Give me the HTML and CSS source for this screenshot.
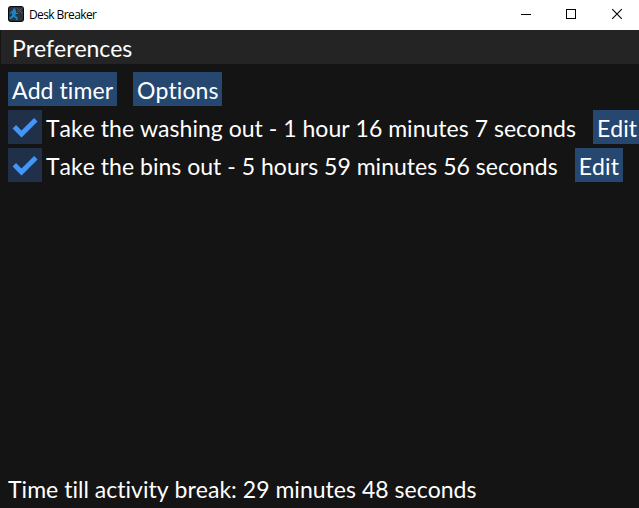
FILE: index.html
```html
<!DOCTYPE html>
<html lang="en">
<head>
<meta charset="utf-8">
<title>Desk Breaker</title>
<link rel="stylesheet" href="styles.css">
</head>
<body>
<div class="window">
  <header class="titlebar">
    <svg class="app-icon" width="16" height="16" viewBox="0 0 16 16">
      <rect width="16" height="16" rx="3" fill="#07090d"/>
      <rect x="1" y="1" width="14" height="14" rx="2" fill="#29343b"/>
      <path d="M5 2.500h2.500v2H5zM3 5.500l2-1h3v2l2 .5v1H7.500v2l2 1v3H8l-.5-2-2-1-2 2H1.500v-1.500l2.500-2V6.500L2.500 8H1.500z" fill="#1c83c4"/>
      <path d="M9 2l5.500 5.500M14.500 1.500L10 6" stroke="#a04028" stroke-width="1" fill="none"/>
    </svg>
    <span class="title">Desk Breaker</span>
    <div class="controls">
      <svg width="46" height="30" viewBox="0 0 46 30" shape-rendering="crispEdges"><path d="M19 14.5h10" stroke="#000"/></svg>
      <svg width="46" height="30" viewBox="0 0 46 30" shape-rendering="crispEdges"><rect x="18.500" y="9.500" width="9" height="9" fill="none" stroke="#000"/></svg>
      <svg width="45" height="30" viewBox="0 0 45 30"><path d="M18.200 9.200l9.600 9.600M27.800 9.200l-9.600 9.600" stroke="#000" stroke-width="1.100"/></svg>
    </div>
  </header>
  <nav class="menubar"><span class="text menu">Preferences</span></nav>
  <main class="content">
    <div class="toolbar">
      <button class="button add"><span class="text">Add timer</span></button>
      <button class="button options"><span class="text">Options</span></button>
    </div>
    <div class="timer">
      <span class="check"><svg width="34" height="34" viewBox="0 0 34 34"><path d="M6.300 16.800l7.200 7.200 14.300-14.300" fill="none" stroke="#4296fa" stroke-width="4.900"/></svg></span>
      <span class="text label">Take the washing out - 1 hour 16 minutes 7 seconds</span>
      <button class="button edit"><span class="text">Edit</span></button>
    </div>
    <div class="timer">
      <span class="check"><svg width="34" height="34" viewBox="0 0 34 34"><path d="M6.300 16.800l7.200 7.200 14.300-14.300" fill="none" stroke="#4296fa" stroke-width="4.900"/></svg></span>
      <span class="text label">Take the bins out - 5 hours 59 minutes 56 seconds</span>
      <button class="button edit"><span class="text">Edit</span></button>
    </div>
  </main>
  <footer class="status"><span class="text">Time till activity break: 29 minutes 48 seconds</span></footer>
</div>
</body>
</html>
```
FILE: styles.css
```css
* { box-sizing: border-box; }
body { margin: 0; overflow: hidden; background: #141414; }
.window {
  width: 639px; height: 508px; display: flex; flex-direction: column;
  overflow: hidden; background: #141414; color: #fff;
  font: 23px/34px Lato, "Liberation Sans", sans-serif;
  font-kerning: none; font-variant-ligatures: none;
  letter-spacing: 0.02px;
}
.titlebar {
  height: 30px; flex: none; display: flex; align-items: center;
  padding-left: 8px; background: #fff; color: #000;
}
.app-icon { flex: none; margin-top: -2px; }
.title { margin-left: 5px; font: 12px/30px "Open Sans", sans-serif; letter-spacing: -0.6px; white-space: nowrap; }
.controls { display: flex; margin-left: auto; }
.controls svg { display: block; }
.menubar { height: 34px; flex: none; padding-left: 11px; margin-left: 1px; background: #242424; }
.text { display: block; white-space: nowrap; padding-top: 2px; line-height: 32px; }
.menu { letter-spacing: -0.08px; }
.content { flex: 1; display: flex; flex-direction: column; gap: 4px; padding: 8px 0 0 8px; }
.toolbar { display: flex; gap: 16px; }
.button {
  flex: none; height: 34px; padding: 0 4px; border: 0; background: #264870;
  color: inherit; font: inherit; text-align: left; letter-spacing: 0.08px;
  font-kerning: none; font-variant-ligatures: none;
}
.add { width: 109px; }
.options { width: 89px; }
.edit { width: 48px; }
.timer { display: flex; height: 34px; }
.check { width: 34px; height: 34px; flex: none; background: #1f3048; margin-right: 4px; }
.check svg { display: block; }
.label { flex: none; margin-right: 17px; }
.status { height: 37px; flex: none; padding-left: 8px; }
```
